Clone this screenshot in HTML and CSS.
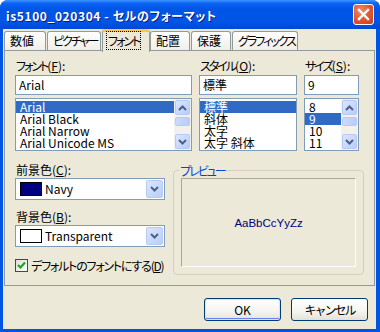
FILE: index.html
```html
<!DOCTYPE html>
<html lang="ja">
<head>
    <meta charset="UTF-8">
    <meta name="viewport" content="width=device-width, initial-scale=1.0">
    <title>セルのフォーマット</title>
    <link rel="stylesheet" href="styles.css">
</head>
<body>
    <div class="window">
        <div class="titlebar">
            <span class="title">is5100_020304 - セルのフォーマット</span>
            <button class="close-btn" aria-label="閉じる">
                <svg width="13" height="13" viewBox="0 0 13 13"><path d="M2 2 L11 11 M11 2 L2 11" stroke="#fff" stroke-width="2.4" stroke-linecap="square"/></svg>
            </button>
        </div>
        <div class="client">
            <div class="tabs">
                <div class="tab">数値</div>
                <div class="tab kana">ピクチャー</div>
                <div class="tab active"><span class="focus kana">フォント</span></div>
                <div class="tab">配置</div>
                <div class="tab">保護</div>
                <div class="tab kana">グラフィックス</div>
            </div>
            <div class="panel">
                <div class="font-grid">
                    <div class="field">
                        <label><span class="kana">フォント</span>(<u>F</u>):</label>
                        <div class="textbox">Arial</div>
                        <div class="listbox">
                            <ul class="items">
                                <li class="selected">Arial</li>
                                <li>Arial Black</li>
                                <li>Arial Narrow</li>
                                <li>Arial Unicode MS</li>
                            </ul>
                            <div class="scrollbar">
                                <span class="sb-btn"><svg width="9" height="6" viewBox="0 0 9 6"><path d="M1 5 L4.5 1.5 L8 5" fill="none" stroke="#4d6185" stroke-width="2"/></svg></span>
                                <span class="sb-thumb"></span>
                                <span class="sb-track"></span>
                                <span class="sb-btn"><svg width="9" height="6" viewBox="0 0 9 6"><path d="M1 1 L4.5 4.5 L8 1" fill="none" stroke="#4d6185" stroke-width="2"/></svg></span>
                            </div>
                        </div>
                    </div>
                    <div class="field">
                        <label><span class="kana">スタイル</span>(<u>O</u>):</label>
                        <div class="textbox">標準</div>
                        <div class="listbox">
                            <ul class="items">
                                <li class="selected">標準</li>
                                <li>斜体</li>
                                <li>太字</li>
                                <li>太字 斜体</li>
                            </ul>
                        </div>
                    </div>
                    <div class="field">
                        <label><span class="kana">サイズ</span>(<u>S</u>):</label>
                        <div class="textbox">9</div>
                        <div class="listbox">
                            <ul class="items">
                                <li>8</li>
                                <li class="selected">9</li>
                                <li>10</li>
                                <li>11</li>
                            </ul>
                            <div class="scrollbar">
                                <span class="sb-btn"><svg width="9" height="6" viewBox="0 0 9 6"><path d="M1 5 L4.5 1.5 L8 5" fill="none" stroke="#4d6185" stroke-width="2"/></svg></span>
                                <span class="sb-thumb"></span>
                                <span class="sb-track"></span>
                                <span class="sb-btn"><svg width="9" height="6" viewBox="0 0 9 6"><path d="M1 1 L4.5 4.5 L8 1" fill="none" stroke="#4d6185" stroke-width="2"/></svg></span>
                            </div>
                        </div>
                    </div>
                </div>

                <div class="lower">
                    <div class="colors">
                        <label>前景色(<u>C</u>):</label>
                        <div class="combo">
                            <span class="swatch navy"></span>
                            <span class="combo-text">Navy</span>
                            <span class="drop-btn"><svg width="9" height="6" viewBox="0 0 9 6"><path d="M1 1 L4.5 4.5 L8 1" fill="none" stroke="#4d6185" stroke-width="2"/></svg></span>
                        </div>
                        <label class="second">背景色(<u>B</u>):</label>
                        <div class="combo">
                            <span class="swatch"></span>
                            <span class="combo-text">Transparent</span>
                            <span class="drop-btn"><svg width="9" height="6" viewBox="0 0 9 6"><path d="M1 1 L4.5 4.5 L8 1" fill="none" stroke="#4d6185" stroke-width="2"/></svg></span>
                        </div>
                        <div class="check">
                            <span class="checkbox"><svg width="11" height="11" viewBox="0 0 11 11"><path d="M2 5 L4.5 7.5 L9 2.5" fill="none" stroke="#21a121" stroke-width="2.2"/></svg></span>
                            <span class="check-label">デフォルトのフォントにする(<u>D</u>)</span>
                        </div>
                    </div>
                    <fieldset class="preview">
                        <legend class="kana">プレビュー</legend>
                        <div class="sample">AaBbCcYyZz</div>
                    </fieldset>
                </div>
            </div>
            <div class="actions">
                <button class="btn default">OK</button>
                <button class="btn kana">キャンセル</button>
            </div>
        </div>
    </div>
</body>
</html>
```

FILE: styles.css
```css
* {
    box-sizing: border-box;
}
body {
    margin: 0;
    background: #fff;
    font-family: "Noto Sans CJK JP", sans-serif;
    font-size: 12px;
    font-feature-settings: "palt";
    color: #000;
}
u {
    text-decoration: underline;
    text-underline-offset: 1px;
}
/* katakana in the original UI font is much narrower */
.kana {
    letter-spacing: -2px;
}
.window {
    width: 380px;
    height: 332px;
    display: flex;
    flex-direction: column;
    background: #0055e5;
    border-radius: 8px 8px 0 0;
    overflow: hidden;
}
.titlebar {
    height: 29px;
    display: flex;
    align-items: center;
    justify-content: space-between;
    padding: 2px 6px 0 6px;
    background: linear-gradient(#3d95ff 0%, #0a62f4 12%, #0055e5 32%, #0056e8 72%, #0048d8 100%);
    color: #fff;
    font-weight: bold;
}
.title {
    line-height: 14px;
    text-shadow: 1px 1px 0 #0a1c8a;
    letter-spacing: 0.6px;
}
.close-btn {
    width: 21px;
    height: 21px;
    margin-top: -2px;
    padding: 0;
    display: flex;
    align-items: center;
    justify-content: center;
    border: 1px solid #fff;
    border-radius: 3px;
    background: radial-gradient(circle at 35% 30%, #f08c6c 0%, #e0532f 55%, #c8401e 100%);
}
.client {
    flex: 1;
    margin: 0 4px 3px 3px;
    background: #ece9d8;
    display: flex;
    flex-direction: column;
}
.tabs {
    height: 21px;
    display: flex;
    align-items: flex-end;
    gap: 1px;
    padding-left: 1px;
}
.tab {
    height: 19px;
    padding: 0 0 0 5px;
    line-height: 18px;
    white-space: nowrap;
    border: 1px solid #919b9c;
    border-bottom: none;
    border-radius: 3px 3px 0 0;
    background: linear-gradient(#fefefe, #f0efe9);
}
.tab:nth-child(1) { width: 42px; }
.tab:nth-child(2) { width: 54px; }
.tab:nth-child(4) { width: 40px; }
.tab:nth-child(5) { width: 40px; }
.tab:nth-child(6) { width: 66px; }
.tab.active {
    width: 48px;
    height: 23px;
    margin: 0 -1px -2px 0;
    padding-left: 4px;
    line-height: 17px;
    border-top: 3px solid #ffc83c;
    background: #ece9d8;
    position: relative;
    z-index: 1;
}
.tab .focus {
    outline: 1px dotted #000;
    padding: 0 1px;
}
.panel {
    width: 371px;
    height: 236px;
    margin-left: 1px;
    border: 1px solid #919b9c;
    background: #ece9d8;
    padding: 8px 10px 0;
}
.font-grid {
    display: grid;
    grid-template-columns: 177px 98px 55px;
    column-gap: 7px;
}
label {
    display: block;
    line-height: 13px;
    padding-left: 1px;
}
.textbox {
    height: 20px;
    margin-top: 3px;
    border: 1px solid #7f9db9;
    background: #fff;
    padding-left: 3px;
    line-height: 17px;
}
.listbox {
    height: 53px;
    margin-top: 3px;
    border: 1px solid #7f9db9;
    background: #fff;
    display: flex;
    overflow: hidden;
}
.items {
    flex: 1;
    list-style: none;
    margin: 0;
    padding: 2px 0 0;
}
.items li {
    line-height: 12px;
    height: 12px;
    padding-left: 4px;
    white-space: nowrap;
}
.items li.selected {
    background: #316ac5;
    color: #fff;
}
.scrollbar {
    width: 17px;
    display: flex;
    flex-direction: column;
    background: #f3f1ec;
}
.sb-btn {
    height: 15px;
    margin: 1px;
    display: flex;
    align-items: center;
    justify-content: center;
    border: 1px solid #b7caf5;
    border-radius: 2px;
    background: linear-gradient(135deg, #dbe6ff, #b9cdfa);
}
.sb-thumb {
    height: 9px;
    margin: 1px;
    border: 1px solid #b7caf5;
    border-radius: 2px;
    background: linear-gradient(90deg, #cbd9fc, #b9cdfa);
}
.sb-track {
    flex: 1;
}
.lower {
    display: flex;
    gap: 8px;
    margin-top: 12px;
}
.colors {
    width: 152px;
}
.colors .second {
    margin-top: 10px;
}
.combo {
    height: 22px;
    margin-top: 2px;
    border: 1px solid #7f9db9;
    background: #fff;
    display: flex;
    align-items: center;
    padding: 1px 1px 1px 4px;
}
.swatch {
    width: 22px;
    height: 14px;
    border: 1px solid #000;
    background: #fff;
}
.swatch.navy {
    background: #000080;
}
.combo-text {
    flex: 1;
    margin-left: 3px;
    line-height: 14px;
}
.drop-btn {
    width: 17px;
    height: 18px;
    display: flex;
    align-items: center;
    justify-content: center;
    border: 1px solid #b7caf5;
    border-radius: 2px;
    background: linear-gradient(135deg, #dbe6ff, #b9cdfa);
}
.check {
    display: flex;
    align-items: center;
    gap: 3px;
    margin-top: 12px;
    line-height: 13px;
    white-space: nowrap;
}
.check-label {
    letter-spacing: -1.2px;
}
.checkbox {
    flex: none;
    width: 13px;
    height: 13px;
    border: 1px solid #1c5180;
    background: linear-gradient(135deg, #dcdcd7, #fff);
    display: flex;
    align-items: center;
    justify-content: center;
}
.preview {
    width: 193px;
    height: 111px;
    margin: 1px 0 0;
    padding: 0 7px 7px;
    border: 1px solid #d0d0bf;
    border-radius: 4px;
    min-inline-size: 0;
}
.preview legend {
    color: #0046d5;
    line-height: 13px;
    padding: 0 1px;
    margin-left: -2px;
}
.sample {
    height: 89px;
    margin-top: 1px;
    border: 1px solid;
    border-color: #aca899 #fff #fff #aca899;
    display: flex;
    align-items: center;
    justify-content: center;
    color: #000080;
    font-family: "Liberation Sans", Arial, sans-serif;
    font-size: 11.5px;
}
.actions {
    display: flex;
    justify-content: flex-end;
    gap: 10px;
    padding: 12px 8px 0 0;
}
.btn {
    width: 77px;
    height: 23px;
    padding: 0;
    font-family: inherit;
    font-size: 12px;
    border: 1px solid #003c74;
    border-radius: 3px;
    background: linear-gradient(#fff 0%, #f4f4f0 60%, #e3e1d7 100%);
    color: #000;
}
.btn.default {
    box-shadow: inset 0 0 0 1px #cee7ff, inset 0 -1px 0 1px #6982ee;
}
```
